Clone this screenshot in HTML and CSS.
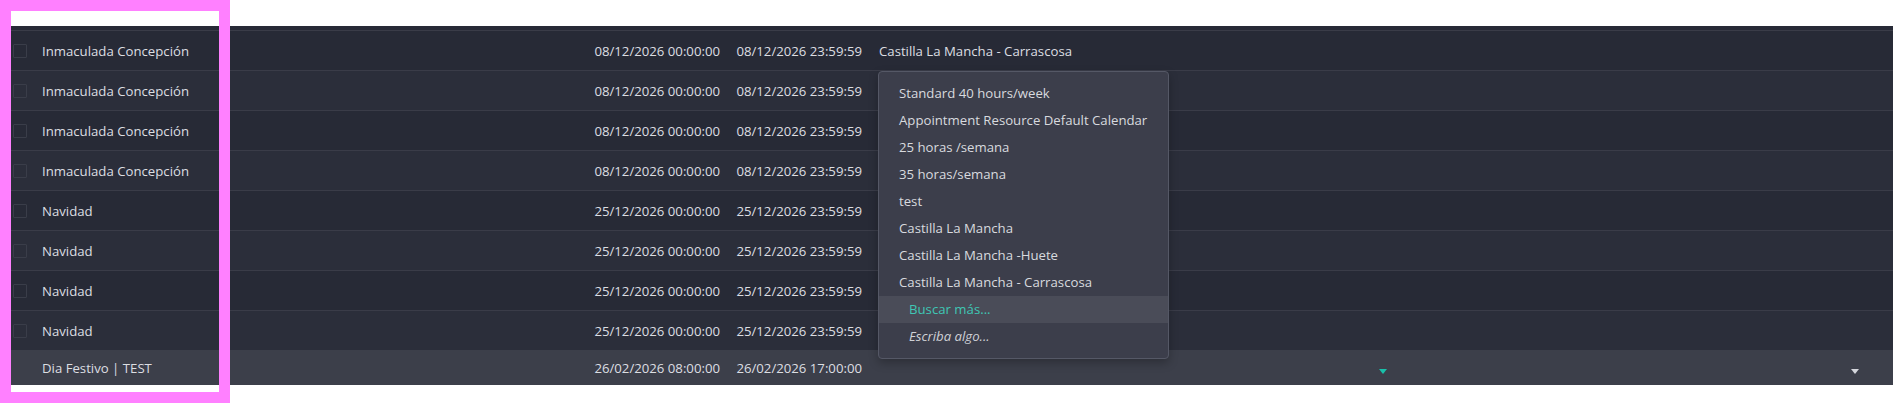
FILE: index.html
```html
<!DOCTYPE html>
<html lang="es">
<head>
<meta charset="utf-8">
<title>Días festivos</title>
<link rel="stylesheet" href="styles.css">
</head>
<body>
<div class="page">
  <div class="list">
    <div class="strip"></div>
    <div class="row odd">
      <div class="cell cb"><span class="box"></span></div>
      <div class="cell name">Inmaculada Concepción</div>
      <div class="cell date">08/12/2026 00:00:00</div>
      <div class="cell date">08/12/2026 23:59:59</div>
      <div class="cell cal">Castilla La Mancha - Carrascosa</div>
      <div class="cell"></div>
      <div class="cell"></div>
    </div>
    <div class="row even">
      <div class="cell cb"><span class="box"></span></div>
      <div class="cell name">Inmaculada Concepción</div>
      <div class="cell date">08/12/2026 00:00:00</div>
      <div class="cell date">08/12/2026 23:59:59</div>
      <div class="cell cal"></div>
      <div class="cell"></div>
      <div class="cell"></div>
    </div>
    <div class="row odd">
      <div class="cell cb"><span class="box"></span></div>
      <div class="cell name">Inmaculada Concepción</div>
      <div class="cell date">08/12/2026 00:00:00</div>
      <div class="cell date">08/12/2026 23:59:59</div>
      <div class="cell cal"></div>
      <div class="cell"></div>
      <div class="cell"></div>
    </div>
    <div class="row even">
      <div class="cell cb"><span class="box"></span></div>
      <div class="cell name">Inmaculada Concepción</div>
      <div class="cell date">08/12/2026 00:00:00</div>
      <div class="cell date">08/12/2026 23:59:59</div>
      <div class="cell cal"></div>
      <div class="cell"></div>
      <div class="cell"></div>
    </div>
    <div class="row odd">
      <div class="cell cb"><span class="box"></span></div>
      <div class="cell name">Navidad</div>
      <div class="cell date">25/12/2026 00:00:00</div>
      <div class="cell date">25/12/2026 23:59:59</div>
      <div class="cell cal"></div>
      <div class="cell"></div>
      <div class="cell"></div>
    </div>
    <div class="row even">
      <div class="cell cb"><span class="box"></span></div>
      <div class="cell name">Navidad</div>
      <div class="cell date">25/12/2026 00:00:00</div>
      <div class="cell date">25/12/2026 23:59:59</div>
      <div class="cell cal"></div>
      <div class="cell"></div>
      <div class="cell"></div>
    </div>
    <div class="row odd">
      <div class="cell cb"><span class="box"></span></div>
      <div class="cell name">Navidad</div>
      <div class="cell date">25/12/2026 00:00:00</div>
      <div class="cell date">25/12/2026 23:59:59</div>
      <div class="cell cal"></div>
      <div class="cell"></div>
      <div class="cell"></div>
    </div>
    <div class="row even">
      <div class="cell cb"><span class="box"></span></div>
      <div class="cell name">Navidad</div>
      <div class="cell date">25/12/2026 00:00:00</div>
      <div class="cell date">25/12/2026 23:59:59</div>
      <div class="cell cal"></div>
      <div class="cell"></div>
      <div class="cell"></div>
    </div>
    <div class="row edit">
      <div class="cell cb"></div>
      <div class="cell name">Dia Festivo | TEST</div>
      <div class="cell date">26/02/2026 08:00:00</div>
      <div class="cell date">26/02/2026 17:00:00</div>
      <div class="cell cal caret-cell"><span class="caret teal"></span></div>
      <div class="cell caret-cell"><span class="caret grey"></span></div>
      <div class="cell"></div>
    </div>
  </div>

  <ul class="dropdown">
    <li class="item">Standard 40 hours/week</li>
    <li class="item">Appointment Resource Default Calendar</li>
    <li class="item">25 horas /semana</li>
    <li class="item">35 horas/semana</li>
    <li class="item">test</li>
    <li class="item">Castilla La Mancha</li>
    <li class="item">Castilla La Mancha -Huete</li>
    <li class="item">Castilla La Mancha - Carrascosa</li>
    <li class="item more active">Buscar más...</li>
    <li class="item more hint">Escriba algo...</li>
  </ul>

  <div class="highlight"></div>
</div>
</body>
</html>
```

FILE: styles.css
```css
* { box-sizing: border-box; }

html, body {
  margin: 0;
  padding: 0;
  background: #ffffff;
}

body {
  font-family: "Open Sans", "Noto Sans", "DejaVu Sans", sans-serif;
  font-size: 13.2px;
  color: #dcdee2;
}

.page {
  position: relative;
  width: 1893px;
  height: 403px;
  padding-top: 26px;
}

.list {
  display: flex;
  flex-direction: column;
  width: 100%;
}

.strip {
  height: 4px;
  background: #272a36;
}

.row {
  display: grid;
  grid-template-columns: 30px 556px 142px 142px 525px 472px 1fr;
  height: 40px;
  border-top: 1px solid #3a3c48;
  align-items: center;
}

.row.odd { background: #272a36; }
.row.even { background: #2b2e3a; }

.row.edit {
  height: 35px;
  border-top: none;
  background: #3c3f4a;
}

.cell {
  white-space: nowrap;
  overflow: hidden;
}

.cb {
  padding-left: 13px;
  display: flex;
  align-items: center;
}

.box {
  display: block;
  width: 14px;
  height: 14px;
  border: 1px solid #3a3d49;
  border-radius: 1px;
}

.name { padding-left: 12px; }

.date {
  text-align: right;
  padding-right: 8px;
}

.cal { padding-left: 9px; }

.caret-cell {
  display: flex;
  justify-content: flex-end;
  align-items: center;
  padding: 8px 8px 0 0;
}

.caret {
  display: block;
  width: 0;
  height: 0;
  border-left: 4px solid transparent;
  border-right: 4px solid transparent;
  border-top: 5px solid #ffffff;
}

.caret.teal { border-top-color: #19c0aa; }
.caret.grey { border-top-color: #d4d6dc; }

.dropdown {
  position: absolute;
  left: 878px;
  top: 71px;
  width: 291px;
  margin: 0;
  padding: 8px 0;
  list-style: none;
  background: #3c3e4b;
  border: 1px solid #555866;
  border-radius: 4px;
  box-shadow: 0 4px 10px rgba(0, 0, 0, 0.25);
}

.item {
  height: 27px;
  line-height: 27px;
  padding-left: 20px;
  color: #d8dadf;
  white-space: nowrap;
}

.item.more { padding-left: 30px; }

.item.active {
  background: #4a4c58;
  color: #3fc6b4;
}

.item.hint {
  font-style: italic;
  color: #cfd1d6;
}

.highlight {
  position: absolute;
  left: 0;
  top: 0;
  width: 230px;
  height: 403px;
  border: 11px solid #ff80ff;
  pointer-events: none;
}
```
